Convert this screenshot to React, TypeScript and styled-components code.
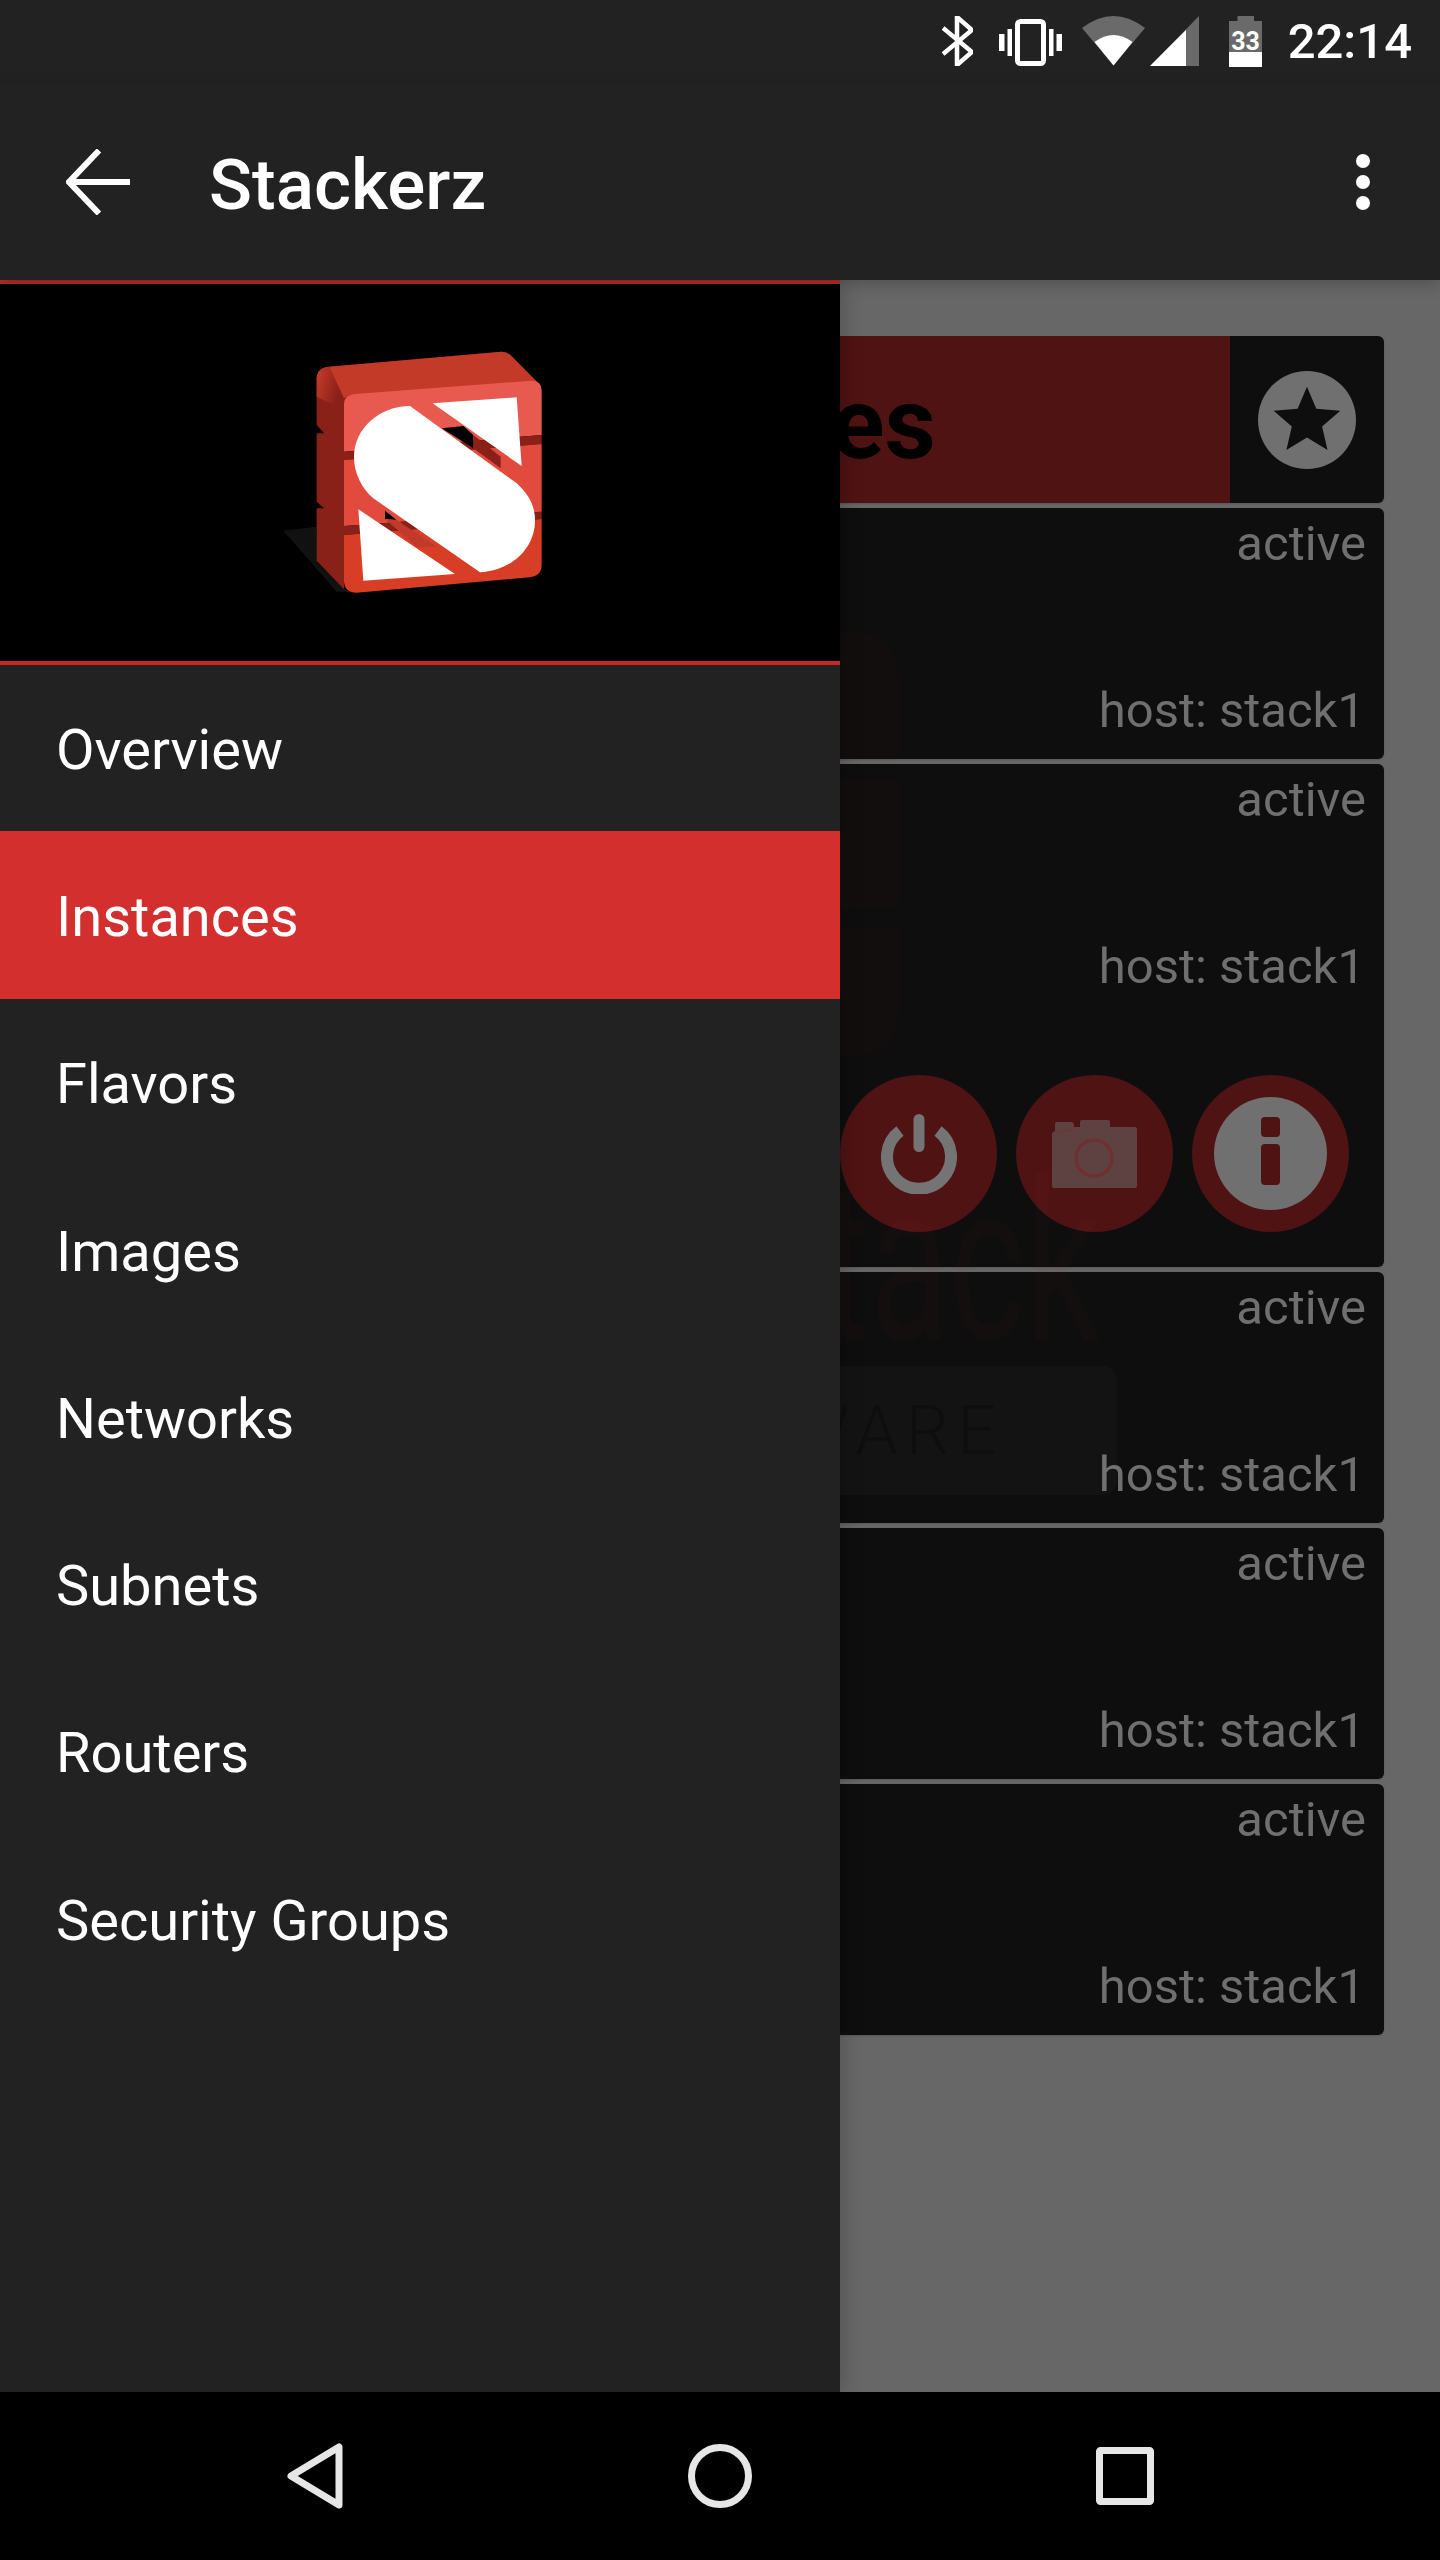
import React from "react";
import styled, { createGlobalStyle } from "styled-components";

const Global = createGlobalStyle`
  html, body { margin: 0; padding: 0; background: #000; }
  * { box-sizing: border-box; }
`;

const Screen = styled.div`
  width: 1440px;
  height: 2560px;
  display: flex;
  flex-direction: column;
  overflow: hidden;
  font-family: Roboto, "Liberation Sans", sans-serif;
`;

const StatusBar = styled.div`
  height: 84px;
  flex: none;
  background: #222222;
  color: #fff;
  position: relative;
  z-index: 3;
  display: flex;
  align-items: flex-start;
  justify-content: flex-end;
  padding: 16px 28px 0 0;
`;

const StatusIcon = styled.svg<{ $gap: number; $top?: number }>`
  display: block;
  flex: none;
  margin-right: ${(p) => p.$gap}px;
  margin-top: ${(p) => p.$top ?? 0}px;
`;

const Clock = styled.span`
  font-size: 49px;
  line-height: 51px;
  font-weight: 500;
  color: #fff;
`;

const BatteryLabel = styled.text`
  font-family: Roboto, sans-serif;
  font-weight: 700;
  font-size: 25px;
  fill: #fff;
`;

const Toolbar = styled.header`
  height: 196px;
  flex: none;
  background: #222222;
  display: flex;
  align-items: center;
  padding: 0 0 0 66px;
  position: relative;
  z-index: 3;
  box-shadow: 0 4px 14px rgba(0, 0, 0, 0.22);
`;

const ToolbarTitle = styled.h1`
  margin: 6px 0 0 79px;
  flex: 1;
  font-size: 71px;
  line-height: 82px;
  font-weight: 500;
  color: #fff;
`;

const OverflowDots = styled.svg`
  display: block;
  margin-right: 70px;
`;

const Body = styled.div`
  flex: 1;
  position: relative;
  overflow: hidden;
`;

const Content = styled.main`
  height: 100%;
  background: #676767;
  padding: 56px 56px 0;
  display: flex;
  flex-direction: column;
  gap: 5px;
`;

const Card = styled.section`
  background: #0e0e0e;
  border-radius: 6px;
  overflow: hidden;
  flex: none;
  box-shadow: 0 1px 2px rgba(0, 0, 0, 0.15);
`;

const HeadCard = styled(Card)`
  height: 167px;
  display: flex;
`;

const TitleBand = styled.div`
  flex: 1;
  background: #4f1313;
  display: flex;
  justify-content: flex-end;
  align-items: center;
  padding: 8px 294px 0 0;
  font-size: 100px;
  font-weight: 700;
  color: #000;
`;

const StarCell = styled.div`
  width: 154px;
  display: flex;
  align-items: center;
  justify-content: center;
`;

const InfoBlock = styled.div`
  height: 251px;
  display: flex;
  flex-direction: column;
  justify-content: space-between;
  align-items: flex-end;
  padding: 7px 18px 20px 0;
  font-size: 49px;
  line-height: 57px;
  color: #6f6f6f;
`;

const HostLine = styled.span`
  margin-right: 1px;
`;

const Actions = styled.div`
  height: 252px;
  display: flex;
  justify-content: flex-end;
  gap: 19px;
  padding: 60px 35px 0 0;
`;

const ActionButton = styled.div`
  width: 157px;
  height: 157px;
  border-radius: 50%;
  background: #4f1313;
  display: flex;
  align-items: center;
  justify-content: center;
`;

const Watermark = styled.div`
  position: absolute;
  inset: 0;
  pointer-events: none;
`;

const WatermarkWord = styled.span`
  position: absolute;
  right: 340px;
  top: 843px;
  font-size: 225px;
  line-height: 280px;
  transform: scaleX(0.65);
  transform-origin: right center;
  color: rgba(190, 40, 40, 0.04);
`;

const WatermarkMark = styled.span`
  position: absolute;
  left: 1115px;
  top: 918px;
  font-size: 38px;
  line-height: 46px;
  color: rgba(255, 255, 255, 0.025);
`;

const WatermarkTag = styled.div`
  position: absolute;
  left: 600px;
  top: 1086px;
  width: 517px;
  height: 129px;
  border-radius: 14px;
  background: rgba(255, 255, 255, 0.025);
  display: flex;
  align-items: center;
  justify-content: flex-end;
  padding-right: 113px;
  font-size: 68px;
  font-weight: 300;
  letter-spacing: 8px;
  color: rgba(0, 0, 0, 0.25);
`;

const WatermarkBlocks = styled.div`
  position: absolute;
  left: 640px;
  top: 353px;
  width: 258px;
  height: 423px;
  display: flex;
  flex-direction: column;
  gap: 20px;
`;

const WatermarkBlock = styled.div`
  flex: 1;
  background: rgba(190, 40, 40, 0.03);
  &:first-child { border-top-right-radius: 40px; }
  &:last-child { border-bottom-right-radius: 40px; }
`;

const Drawer = styled.nav`
  position: absolute;
  left: 0;
  top: 0;
  bottom: 0;
  width: 840px;
  background: #222222;
  box-shadow: 4px 0 18px rgba(0, 0, 0, 0.18);
`;

const DrawerHeader = styled.div`
  height: 385px;
  background: #000;
  border-top: 4px solid #b92a2a;
  border-bottom: 4px solid #c62828;
  display: flex;
  align-items: center;
  justify-content: center;
`;

const MenuList = styled.div`
  margin-top: -1px;
`;

const MenuItem = styled.div<{ $active?: boolean }>`
  height: 167.3px;
  display: flex;
  align-items: center;
  padding: 4px 0 0 56px;
  font-size: 56px;
  color: #fff;
  background: ${(p) => (p.$active ? "#d32f2f" : "transparent")};
`;

const NavBar = styled.footer`
  height: 168px;
  flex: none;
  background: #000;
  display: flex;
  align-items: center;
  justify-content: center;
  gap: 237px;
  position: relative;
  z-index: 3;
`;

const NavButton = styled.div`
  width: 168px;
  height: 168px;
  display: flex;
  align-items: center;
  justify-content: center;
`;

const Logo = () => (
  <svg width="360" height="305" viewBox="0 0 1080 915">
    <defs>
      <linearGradient id="logoEdge" x1="0.1" y1="0" x2="0.9" y2="0.35">
        <stop offset="0" stopColor="#c33a28" />
        <stop offset="1" stopColor="#8a2118" />
      </linearGradient>
    </defs>
    <polygon points="130,632 230,620 232,725 320,815 290,815" fill="#111" />
    <path d="M230 175 Q232 142 268 140 L785 95 Q800 95 812 106 L895 190 L340 225 Q318 228 312 250 L312 808 Q316 818 345 818 Q325 818 312 808 L230 722 L230 565 L252 565 L230 545 L230 340 L252 340 L230 315 Z" fill="#8a2118" />
    <path d="M230 175 Q232 142 268 140 L312 225 L312 270 L230 230 Z" fill="url(#logoEdge)" />
    <path d="M268 140 L785 95 Q800 95 812 106 L895 190 L340 225 Q325 226 312 235 Z" fill="#c33a28" />
    <path d="M312 395 L312 250 Q314 225 345 222 L875 182 Q905 182 905 212 L905 345 Z" fill="#e85a50" />
    <polygon points="312,395 905,345 905,372 312,420" fill="#8a2118" />
    <polygon points="312,420 905,372 905,575 312,618" fill="#e14a3c" />
    <polygon points="312,618 905,575 905,597 312,645" fill="#8a2118" />
    <path d="M312 645 L905 597 L905 735 Q905 768 868 772 L350 818 Q315 818 312 785 Z" fill="#d83e26" />
    <polygon points="605,325 670,318 700,345 700,385" fill="#000" />
    <polygon points="700,345 782,410 782,445 700,385" fill="#8a2118" />
    <polygon points="435,572 435,597 470,600" fill="#000" />
    <polygon points="435,597 470,600 590,680 530,680" fill="#c0392b" />
    <polygon points="578,250 830,232 845,438" fill="#fff" />
    <polygon points="355,568 370,782 645,762" fill="#fff" />
    <path d="M510 258 L830 490 C868 525 885 560 885 600 C885 690 810 752 720 757 L400 535 C365 505 342 460 342 410 C342 325 420 258 510 258 Z" fill="#fff" />
  </svg>
);

const menu = ["Overview", "Instances", "Flavors", "Images", "Networks", "Subnets", "Routers", "Security Groups"];
const instances = [false, true, false, false, false];

export default function App() {
  return (
    <Screen>
      <Global />
      <StatusBar>
        <StatusIcon $gap={26} width="31" height="50" viewBox="0 0 31 50">
          <path d="M1 12 L30 36 L15 49 L15 1 L30 14 L1 38" fill="none" stroke="#fff" strokeWidth="4.5" />
        </StatusIcon>
        <StatusIcon $gap={20} $top={3} width="63" height="47" viewBox="0 0 63 47">
          <rect x="0" y="15" width="5.500" height="17" fill="#fff" />
          <rect x="8.500" y="10" width="4.500" height="27" fill="#fff" />
          <rect x="50" y="10" width="4.500" height="27" fill="#fff" />
          <rect x="57.500" y="15" width="5.500" height="17" fill="#fff" />
          <rect x="18.500" y="2.500" width="26" height="42" rx="3" fill="none" stroke="#fff" strokeWidth="5" />
        </StatusIcon>
        <StatusIcon $gap={5} width="63" height="50" viewBox="0 0 63 50">
          <path d="M31.500 49.500 L0 12 Q31.500 -12 63 12 Z" fill="#6a6a6a" />
          <path d="M31.500 49.500 L12.500 26 Q31.500 12 50.500 26 Z" fill="#fff" />
        </StatusIcon>
        <StatusIcon $gap={30} width="49" height="50" viewBox="0 0 49 50">
          <polygon points="0,50 49,0 49,50" fill="#6a6a6a" />
          <polygon points="0,50 36,14 36,50" fill="#fff" />
        </StatusIcon>
        <StatusIcon $gap={26} width="33" height="51" viewBox="0 0 33 51">
          <path d="M8.500 0 H25 V5 H33 V37 H0 V5 H8.500 Z" fill="#6a6a6a" />
          <rect x="0" y="36" width="33" height="15" fill="#fff" />
          <BatteryLabel x="16.500" y="34" textAnchor="middle">33</BatteryLabel>
        </StatusIcon>
        <Clock>22:14</Clock>
      </StatusBar>
      <Toolbar>
        <svg width="64" height="66" viewBox="0 0 64 66">
          <path d="M33 1.500 L3 33 L33 64.500 M3 33 H64" fill="none" stroke="#fff" strokeWidth="6" />
        </svg>
        <ToolbarTitle>Stackerz</ToolbarTitle>
        <OverflowDots width="14" height="56" viewBox="0 0 14 56">
          <circle cx="7" cy="7" r="7" fill="#fff" />
          <circle cx="7" cy="28" r="7" fill="#fff" />
          <circle cx="7" cy="49" r="7" fill="#fff" />
        </OverflowDots>
      </Toolbar>
      <Body>
        <Content>
          <HeadCard>
            <TitleBand>Instances</TitleBand>
            <StarCell>
              <svg width="98" height="98" viewBox="0 0 98 98">
                <circle cx="49" cy="49" r="49" fill="#707070" />
                <path transform="translate(9 9) scale(3.33)" d="M12 17.27 18.18 21l-1.64-7.03L22 9.24l-7.19-.61L12 2 9.19 8.63 2 9.24l5.46 4.73L5.82 21z" fill="#0e0e0e" />
              </svg>
            </StarCell>
          </HeadCard>
          {instances.map((open, i) => (
            <Card key={i}>
              <InfoBlock>
                <span>active</span>
                <HostLine>host: stack1</HostLine>
              </InfoBlock>
              {open && (
                <Actions>
                  <ActionButton>
                    <svg width="76" height="80" viewBox="0 0 76 80">
                      <path d="M19 17 A32 32 0 1 0 57 17" fill="none" stroke="#747474" strokeWidth="12" />
                      <rect x="32.500" y="0" width="11" height="38" rx="5.500" fill="#747474" />
                    </svg>
                  </ActionButton>
                  <ActionButton>
                    <svg width="85" height="68" viewBox="0 0 85 68">
                      <path d="M0 14 Q0 12 3 11 V4 Q3 2 5 2 H19 Q22 2 22 5 V7 H28 V2 Q28 0 30 0 H56 Q58 0 58 2 V7 H83 Q85 7 85 9 V66 Q85 68 83 68 H2 Q0 68 0 66 Z" fill="#5e4141" />
                      <path d="M5 13 L22 9" fill="none" stroke="#6a3a3a" strokeWidth="1.500" />
                      <circle cx="42" cy="38" r="18" fill="none" stroke="#6e3030" strokeWidth="3.500" />
                    </svg>
                  </ActionButton>
                  <ActionButton>
                    <svg width="113" height="113" viewBox="0 0 113 113">
                      <circle cx="56.500" cy="56.500" r="56.500" fill="#707070" />
                      <rect x="47" y="20" width="19" height="20" rx="4" fill="#4f1313" />
                      <rect x="47" y="47" width="19" height="41" rx="4" fill="#4f1313" />
                    </svg>
                  </ActionButton>
                </Actions>
              )}
            </Card>
          ))}
        </Content>
        <Watermark>
          <WatermarkBlocks>
            <WatermarkBlock />
            <WatermarkBlock />
            <WatermarkBlock />
          </WatermarkBlocks>
          <WatermarkWord>stack</WatermarkWord>
          <WatermarkMark>TM</WatermarkMark>
          <WatermarkTag>WARE</WatermarkTag>
        </Watermark>
        <Drawer>
          <DrawerHeader>
            <Logo />
          </DrawerHeader>
          <MenuList>
            {menu.map((m) => (
              <MenuItem key={m} $active={m === "Instances"}>{m}</MenuItem>
            ))}
          </MenuList>
        </Drawer>
      </Body>
      <NavBar>
        <NavButton>
          <svg width="56" height="66" viewBox="0 0 56 66">
            <path d="M52 4 V62 L4 33 Z" fill="none" stroke="#e6e6e6" strokeWidth="7" strokeLinejoin="round" />
          </svg>
        </NavButton>
        <NavButton>
          <svg width="64" height="64" viewBox="0 0 64 64">
            <circle cx="32" cy="32" r="28.500" fill="none" stroke="#e6e6e6" strokeWidth="7" />
          </svg>
        </NavButton>
        <NavButton>
          <svg width="58" height="58" viewBox="0 0 58 58">
            <rect x="3.500" y="3.500" width="51" height="51" rx="1" fill="none" stroke="#e6e6e6" strokeWidth="7" />
          </svg>
        </NavButton>
      </NavBar>
    </Screen>
  );
}
